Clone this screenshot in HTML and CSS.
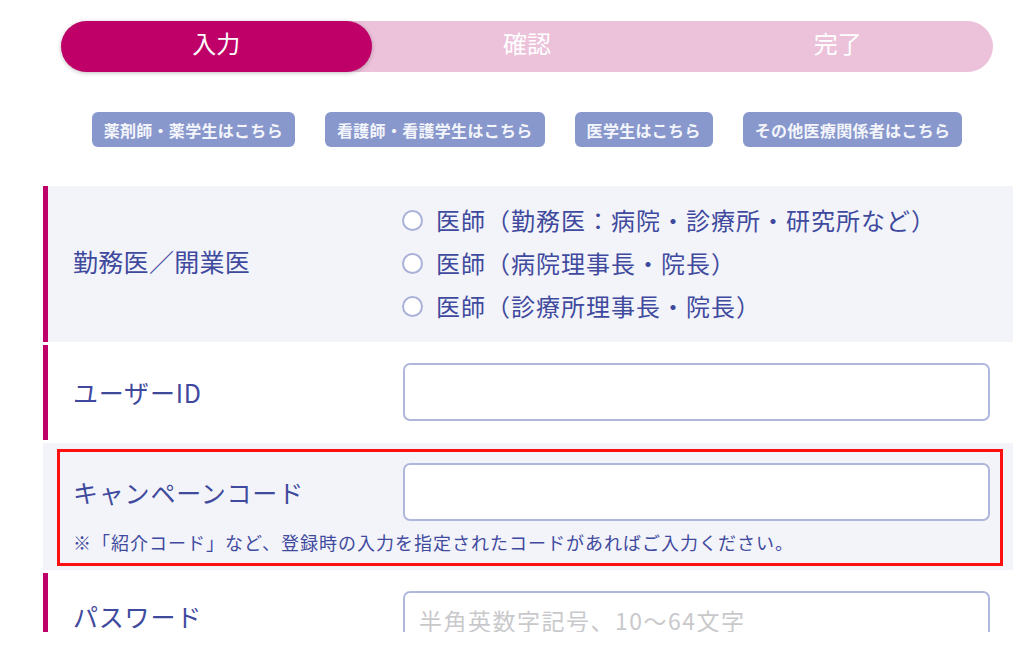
FILE: index.html
```html
<!DOCTYPE html>
<html lang="ja">
<head>
    <meta charset="UTF-8">
    <meta name="viewport" content="width=device-width, initial-scale=1.0">
    <title>会員登録 - 入力</title>
    <link rel="stylesheet" href="styles.css">
</head>
<body>
    <div class="page">
        <ol class="steps">
            <li class="step active">入力</li>
            <li class="step">確認</li>
            <li class="step">完了</li>
        </ol>

        <div class="roles">
            <a class="role-btn" href="#">薬剤師・薬学生はこちら</a>
            <a class="role-btn" href="#">看護師・看護学生はこちら</a>
            <a class="role-btn" href="#">医学生はこちら</a>
            <a class="role-btn" href="#">その他医療関係者はこちら</a>
        </div>

        <form class="form">
            <div class="row shaded required kind-row">
                <div class="label">勤務医／開業医</div>
                <div class="field radios">
                    <label class="radio"><input type="radio" name="kind"><span>医師（勤務医：病院・診療所・研究所など）</span></label>
                    <label class="radio"><input type="radio" name="kind"><span>医師（病院理事長・院長）</span></label>
                    <label class="radio"><input type="radio" name="kind"><span>医師（診療所理事長・院長）</span></label>
                </div>
            </div>

            <div class="row required">
                <label class="label" for="userId">ユーザーID</label>
                <div class="field"><input class="text-input" type="text" id="userId"></div>
            </div>

            <div class="row shaded optional">
                <div class="highlight">
                    <div class="highlight-main">
                        <label class="label" for="campaign">キャンペーンコード</label>
                        <div class="field"><input class="text-input" type="text" id="campaign"></div>
                    </div>
                    <p class="note">※「紹介コード」など、登録時の入力を指定されたコードがあればご入力ください。</p>
                </div>
            </div>

            <div class="row required">
                <label class="label" for="password">パスワード</label>
                <div class="field"><input class="text-input" type="password" id="password" placeholder="半角英数字記号、10〜64文字"></div>
            </div>
        </form>
    </div>
</body>
</html>
```

FILE: styles.css
```css
* {
    margin: 0;
    padding: 0;
    box-sizing: border-box;
}

body {
    background: #fff;
    font-family: "Noto Sans CJK JP", "Noto Sans", sans-serif;
    color: #3f4a9e;
}

.page {
    height: 632px;
    overflow: hidden;
    padding-top: 21px;
}

/* ステップ表示 */
.steps {
    list-style: none;
    display: flex;
    width: 932px;
    height: 51px;
    margin-left: 61px;
    background: #ecc1da;
    border-radius: 26px;
}

.step {
    flex: 1;
    display: flex;
    align-items: center;
    justify-content: center;
    padding-bottom: 8px;
    color: #fff;
    font-size: 24px;
    border-radius: 26px;
}

.step.active {
    background: #be0068;
    box-shadow: 0 1px 4px rgba(0, 0, 0, 0.25);
}

/* 職種ボタン */
.roles {
    display: flex;
    justify-content: center;
    gap: 30px;
    width: 932px;
    margin: 40px 0 0 61px;
}

.role-btn {
    display: flex;
    align-items: center;
    height: 35px;
    padding: 0 12px;
    background: #8898cc;
    color: #f4f5fb;
    font-size: 16px;
    font-weight: bold;
    letter-spacing: 0.3px;
    text-decoration: none;
    border-radius: 6px;
}

/* フォーム */
.form {
    width: 970px;
    margin: 39px 0 0 43px;
    display: flex;
    flex-direction: column;
    gap: 3px;
}

.row {
    display: flex;
    align-items: center;
    border-left: 5px solid transparent;
    padding: 18px 23px 19px 25px;
}

.row.required {
    border-left-color: #be0068;
}

.row.shaded {
    background: #f3f4f9;
}

.label {
    width: 330px;
    flex-shrink: 0;
    font-size: 25px;
    line-height: 1.3;
    letter-spacing: 0.8px;
}

.field {
    flex: 1;
}

.kind-row {
    height: 156px;
    padding-top: 0;
    padding-bottom: 0;
}

.kind-row .label {
    padding-bottom: 6px;
    letter-spacing: 0.3px;
}

.radios {
    display: flex;
    flex-direction: column;
    padding-bottom: 4px;
}

.radio {
    display: flex;
    align-items: center;
    gap: 13px;
    height: 43px;
    font-size: 24px;
    letter-spacing: 1px;
    margin-left: -1px;
}

.radio input {
    appearance: none;
    width: 21px;
    height: 21px;
    margin-top: 3px;
    border: 2px solid #aab1d9;
    border-radius: 50%;
    background: #fff;
    flex-shrink: 0;
}

.text-input {
    display: block;
    width: 100%;
    height: 58px;
    border: 2px solid #b1b7dc;
    border-radius: 7px;
    background: #fff;
    padding: 0 14px;
    font-family: inherit;
    font-size: 23px;
    letter-spacing: 1.5px;
    color: #3f4a9e;
}

.text-input::placeholder {
    color: #c9c9cc;
}

.row:last-child {
    align-items: flex-start;
}

.row:last-child .label {
    padding-top: 12px;
    line-height: 1.1;
}

/* キャンペーンコード（赤枠） */
.row.optional {
    padding: 6px 10px 4px 9px;
}

.highlight {
    flex: 1;
    border: 3px solid #ff1010;
    padding: 11px 10px 9px 13px;
}

.highlight-main {
    display: flex;
    align-items: center;
}

.note {
    margin-top: 10px;
    font-size: 18px;
    line-height: 1.3;
    letter-spacing: 1px;
}
```
